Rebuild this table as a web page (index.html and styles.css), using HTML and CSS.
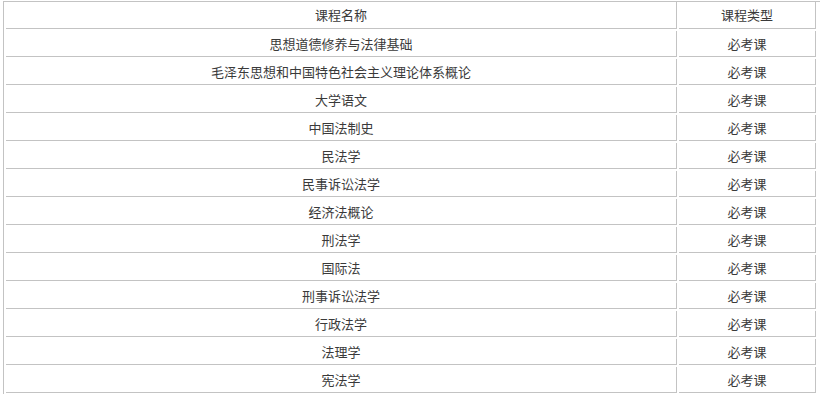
FILE: index.html
```html
<!DOCTYPE html>
<html lang="zh">
<head>
<meta charset="utf-8">
<title>课程</title>
<link rel="stylesheet" href="styles.css">
</head>
<body>
<div class="wrap">
<table class="courses">
<thead>
<tr><th class="name">课程名称</th><th class="type">课程类型</th></tr>
</thead>
<tbody>
<tr><td>思想道德修养与法律基础</td><td>必考课</td></tr>
<tr><td>毛泽东思想和中国特色社会主义理论体系概论</td><td>必考课</td></tr>
<tr><td>大学语文</td><td>必考课</td></tr>
<tr><td>中国法制史</td><td>必考课</td></tr>
<tr><td>民法学</td><td>必考课</td></tr>
<tr><td>民事诉讼法学</td><td>必考课</td></tr>
<tr><td>经济法概论</td><td>必考课</td></tr>
<tr><td>刑法学</td><td>必考课</td></tr>
<tr><td>国际法</td><td>必考课</td></tr>
<tr><td>刑事诉讼法学</td><td>必考课</td></tr>
<tr><td>行政法学</td><td>必考课</td></tr>
<tr><td>法理学</td><td>必考课</td></tr>
<tr><td>宪法学</td><td>必考课</td></tr>
</tbody>
</table>
</div>
</body>
</html>
```
FILE: styles.css
```css
html, body {
  margin: 0;
  padding: 0;
  background: #fff;
}
body {
  font-family: "Noto Sans CJK SC", "Microsoft YaHei", sans-serif;
  font-size: 13px;
  color: #3a3a3a;
}
.wrap {
  margin: 1px 0 0 3px;
  border-top: 1px solid #c3c3c3;
  border-left: 1px solid #c3c3c3;
  height: 393px;
  box-sizing: border-box;
  overflow: hidden;
}
.courses {
  table-layout: fixed;
  width: 814px;
  border-collapse: separate;
  border-spacing: 2px;
  margin-top: -2px;
}
.courses th,
.courses td {
  box-sizing: border-box;
  border-right: 1px solid #c3c3c3;
  border-bottom: 1px solid #c3c3c3;
  text-align: center;
  font-weight: normal;
  height: 26px;
  padding: 0;
  line-height: 25px;
  white-space: nowrap;
}
.courses th {
  height: 27px;
  line-height: 26px;
}
.courses .name { width: 671px; }
.courses .type { width: 137px; }
```
